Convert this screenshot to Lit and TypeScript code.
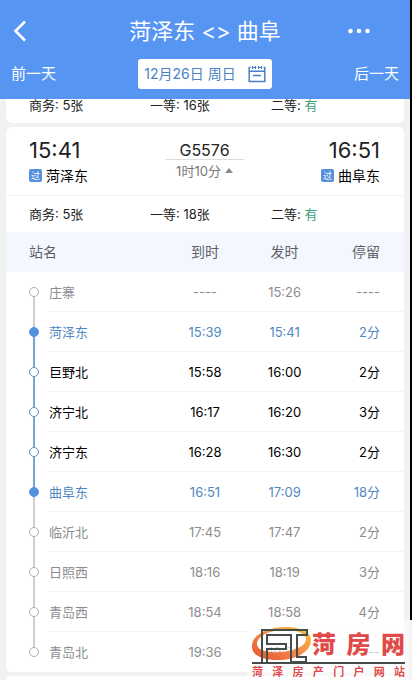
import { LitElement, html, css } from "lit";
import { customElement } from "lit/decorators.js";
import { classMap } from "lit/directives/class-map.js";

type Kind = "off" | "end" | "on";
interface Stop {
  name: string;
  arrive: string;
  depart: string;
  stay: string;
  kind: Kind;
}

const stops: Stop[] = [
  { name: "庄寨", arrive: "----", depart: "15:26", stay: "----", kind: "off" },
  { name: "菏泽东", arrive: "15:39", depart: "15:41", stay: "2分", kind: "end" },
  { name: "巨野北", arrive: "15:58", depart: "16:00", stay: "2分", kind: "on" },
  { name: "济宁北", arrive: "16:17", depart: "16:20", stay: "3分", kind: "on" },
  { name: "济宁东", arrive: "16:28", depart: "16:30", stay: "2分", kind: "on" },
  { name: "曲阜东", arrive: "16:51", depart: "17:09", stay: "18分", kind: "end" },
  { name: "临沂北", arrive: "17:45", depart: "17:47", stay: "2分", kind: "off" },
  { name: "日照西", arrive: "18:16", depart: "18:19", stay: "3分", kind: "off" },
  { name: "青岛西", arrive: "18:54", depart: "18:58", stay: "4分", kind: "off" },
  { name: "青岛北", arrive: "19:36", depart: "19:36", stay: "----", kind: "off" },
];

const firstOn = stops.findIndex((s) => s.kind === "end");
const lastOn = stops.length - 1 - [...stops].reverse().findIndex((s) => s.kind === "end");

@customElement("app-root")
export class AppRoot extends LitElement {
  static styles = css`
    :host {
      display: flex;
      flex-direction: column;
      position: relative;
      box-sizing: border-box;
      min-height: 100vh;
      background: #f0f1f3;
      border-right: 2px solid #000;
      color: #222;
      font-family: Inter, "Noto Sans CJK SC", sans-serif;
      font-size: 13px;
      line-height: 20px;
    }
    button {
      border: 0;
      padding: 0;
      background: none;
      color: inherit;
      font: inherit;
      cursor: pointer;
    }
    svg {
      display: block;
    }
    .top {
      position: relative;
      z-index: 1;
      background: #5695f2;
      color: #fff;
      padding: 15px 11px 10px;
    }
    .bar,
    .days {
      display: grid;
      grid-template-columns: 1fr auto 1fr;
      align-items: center;
    }
    .bar {
      height: 32px;
      margin-bottom: 12px;
    }
    .days {
      height: 30px;
      font-size: 15px;
    }
    .title {
      margin: 0;
      font-size: 22px;
      line-height: 32px;
      font-weight: 400;
    }
    .right {
      justify-self: end;
    }
    .left {
      justify-self: start;
    }
    .more {
      padding-right: 29px;
    }
    .date {
      display: flex;
      align-items: center;
      gap: 12px;
      height: 30px;
      padding: 0 6px;
      border-radius: 3px;
      background: #fff;
      color: #4a84c4;
      font-size: 14px;
    }
    .list {
      display: flex;
      flex-direction: column;
      flex: 1;
      gap: 4px;
      padding: 0 6px;
    }
    .card {
      background: #fff;
      border-radius: 6px;
      overflow: hidden;
    }
    .under {
      margin-top: -12px;
    }
    .next {
      flex: 1;
      border-radius: 6px 6px 0 0;
    }
    .seats {
      display: grid;
      grid-template-columns: 1fr 1fr 1fr;
      align-items: center;
      height: 36px;
      padding: 0 12px 0 23px;
    }
    .yes {
      color: #3f9e7c;
    }
    .trip {
      display: grid;
      grid-template-columns: 1fr auto 1fr;
      height: 69px;
      box-sizing: border-box;
      padding: 9px 24px 0 23px;
      border-bottom: 1px solid #f2f2f3;
    }
    .time {
      font-size: 22px;
      line-height: 28px;
    }
    .to {
      text-align: right;
    }
    .place {
      display: inline-flex;
      align-items: center;
      gap: 4px;
      font-size: 14px;
      color: #000;
    }
    .via {
      width: 13px;
      height: 13px;
      border-radius: 2px;
      background: #5590dd;
      color: #fff;
      font-size: 9px;
      line-height: 13px;
      text-align: center;
    }
    .mid {
      display: flex;
      flex-direction: column;
      align-items: center;
      padding-top: 5px;
    }
    .code {
      font-size: 16px;
      line-height: 18px;
      padding: 0 14px;
      border-bottom: 1px solid #dddddf;
    }
    .span {
      display: flex;
      align-items: center;
      gap: 4px;
      color: #777;
      line-height: 22px;
    }
    .stops {
      width: 100%;
      table-layout: fixed;
      border-collapse: separate;
      border-spacing: 0;
    }
    .c-rail {
      width: 43px;
    }
    .c-time {
      width: 20%;
    }
    th,
    td {
      height: 40px;
      padding: 0;
      box-sizing: border-box;
      font-weight: 400;
      text-align: center;
    }
    thead th {
      background: #f4f7fe;
      color: #5d5f66;
      font-size: 14px;
    }
    thead .first {
      padding-left: 23px;
    }
    .first,
    .name {
      text-align: left;
    }
    th.last,
    td.last {
      text-align: right;
      padding-right: 24px;
    }
    tbody .cell {
      border-bottom: 1px solid #f4f4f5;
    }
    tbody tr:last-child .cell {
      border-bottom-color: transparent;
    }
    .off {
      color: #8c8c8e;
    }
    .end {
      color: #4f88c2;
    }
    .on {
      color: #000;
    }
    .rail {
      display: flex;
      flex-direction: column;
      align-items: center;
      width: 10px;
      height: 40px;
      margin-left: 23px;
    }
    .seg {
      flex: 1;
      width: 2px;
      background: #cfcfd1;
    }
    .seg.lit {
      background: #7ba3cf;
    }
    .seg.none {
      background: none;
    }
    .dot {
      box-sizing: border-box;
      width: 10px;
      height: 10px;
      border: 1px solid #b0b0b2;
      border-radius: 50%;
    }
    .on .dot {
      border-color: #5a8fc8;
    }
    .end .dot {
      border-color: #5590e0;
      background: #5590e0;
    }
    .mark {
      position: absolute;
      z-index: 2;
      right: -2px;
      bottom: 0;
      box-sizing: border-box;
      width: 165px;
      height: 60px;
      padding: 7px 5px 0;
      border-right: 2px solid #f2f2f2;
      background: rgba(255, 255, 255, 0.6);
      color: #e04a4a;
      font-family: "Noto Sans CJK SC", sans-serif;
      font-weight: 700;
    }
    .logo {
      display: flex;
      justify-content: space-between;
      height: 35px;
      border-bottom: 2px solid #454d4b;
    }
    .big,
    .small {
      display: flex;
      justify-content: space-between;
    }
    .big {
      width: 93px;
      font-size: 24px;
      line-height: 32px;
      font-weight: 900;
    }
    .small {
      font-size: 11px;
      line-height: 14px;
    }
  `;

  private seats(first: string) {
    return html`<div class="seats">
      <span>商务: 5张</span><span>一等: ${first}张</span><span>二等: <span class="yes">有</span></span>
    </div>`;
  }

  private row(s: Stop, i: number) {
    const above = { seg: true, none: i === 0, lit: i > firstOn && i <= lastOn };
    const below = { seg: true, none: i === stops.length - 1, lit: i >= firstOn && i < lastOn };
    return html`<tr class=${s.kind}>
      <td>
        <div class="rail">
          <span class=${classMap(above)}></span><span class="dot"></span><span class=${classMap(below)}></span>
        </div>
      </td>
      <th class="cell name" scope="row">${s.name}</th>
      <td class="cell">${s.arrive}</td>
      <td class="cell">${s.depart}</td>
      <td class="cell last">${s.stay}</td>
    </tr>`;
  }

  render() {
    return html`
      <header class="top">
        <div class="bar">
          <button class="left" aria-label="返回">
            <svg width="18" height="22" viewBox="0 0 18 22" fill="none" stroke="#fff" stroke-width="2.600">
              <path d="M14 1.500 4.500 11l9.500 9.500" />
            </svg>
          </button>
          <h1 class="title">菏泽东 &lt;&gt; 曲阜</h1>
          <button class="right more" aria-label="更多">
            <svg width="22" height="6" viewBox="0 0 22 6" fill="#fff">
              <circle cx="2.500" cy="3" r="2.300" /><circle cx="11" cy="3" r="2.300" /><circle cx="19.500" cy="3" r="2.300" />
            </svg>
          </button>
        </div>
        <div class="days">
          <button class="left">前一天</button>
          <button class="date">
            12月26日 周日
            <svg width="18" height="18" viewBox="0 0 18 18" fill="none" stroke="#4a7fc8" stroke-width="1.500">
              <path d="M2.500 2.500H1.200v14h15.600v-14h-1.300M1 6.200h16M5 10.500h8" />
              <path d="M4.500 4V1M7.500 4V1M10.500 4V1M13.500 4V1M4.500 2.500h3M10.500 2.500h3" stroke-width="1.200" />
            </svg>
          </button>
          <button class="right">后一天</button>
        </div>
      </header>
      <main class="list">
        <section class="card under">${this.seats("16")}</section>
        <section class="card">
          <div class="trip">
            <div>
              <div class="time">15:41</div>
              <div class="place"><span class="via">过</span>菏泽东</div>
            </div>
            <div class="mid">
              <div class="code">G5576</div>
              <div class="span">
                1时10分
                <svg width="8" height="6" viewBox="0 0 8 6" fill="#8a8a8c"><path d="M4 0l4 5H0z" /></svg>
              </div>
            </div>
            <div class="to">
              <div class="time">16:51</div>
              <div class="place"><span class="via">过</span>曲阜东</div>
            </div>
          </div>
          ${this.seats("18")}
          <table class="stops">
            <colgroup>
              <col class="c-rail" /><col /><col class="c-time" /><col class="c-time" /><col class="c-time" />
            </colgroup>
            <thead>
              <tr>
                <th class="first" colspan="2" scope="col">站名</th>
                <th scope="col">到时</th>
                <th scope="col">发时</th>
                <th class="last" scope="col">停留</th>
              </tr>
            </thead>
            <tbody>
              ${stops.map((s, i) => this.row(s, i))}
            </tbody>
          </table>
        </section>
        <section class="card next"></section>
      </main>
      <div class="mark">
        <div class="logo">
          <svg width="60" height="36" viewBox="0 0 60 36" fill="none" aria-hidden="true">
            <defs>
              <linearGradient id="flame" x1="0" y1="1" x2="1" y2="0">
                <stop offset="0" stop-color="#e8502e" />
                <stop offset="0.500" stop-color="#f58a4a" />
                <stop offset="1" stop-color="#f9c13a" />
              </linearGradient>
            </defs>
            <path
              fill="url(#flame)"
              fill-rule="evenodd"
              d="M0 20C-1 8 16 0 34 0C49 0 59 5 59 13C59 25 44 33 26 33C10 33 0 28 0 20ZM5 17C5 23 15 26 28 25C43 24 54 19 54 12C54 6 44 3 33 3C18 3 5 9 5 17Z"
            />
            <path
              stroke="#454d4b"
              stroke-width="2"
              d="M10 35V3H55V8H45V30H54V35M15 35V22H34V17H15V8H39V35H54"
            />
          </svg>
          <div class="big"><span>菏</span><span>房</span><span>网</span></div>
        </div>
        <div class="small">${[..."菏泽房产门户网站"].map((c) => html`<span>${c}</span>`)}</div>
      </div>
    `;
  }
}
